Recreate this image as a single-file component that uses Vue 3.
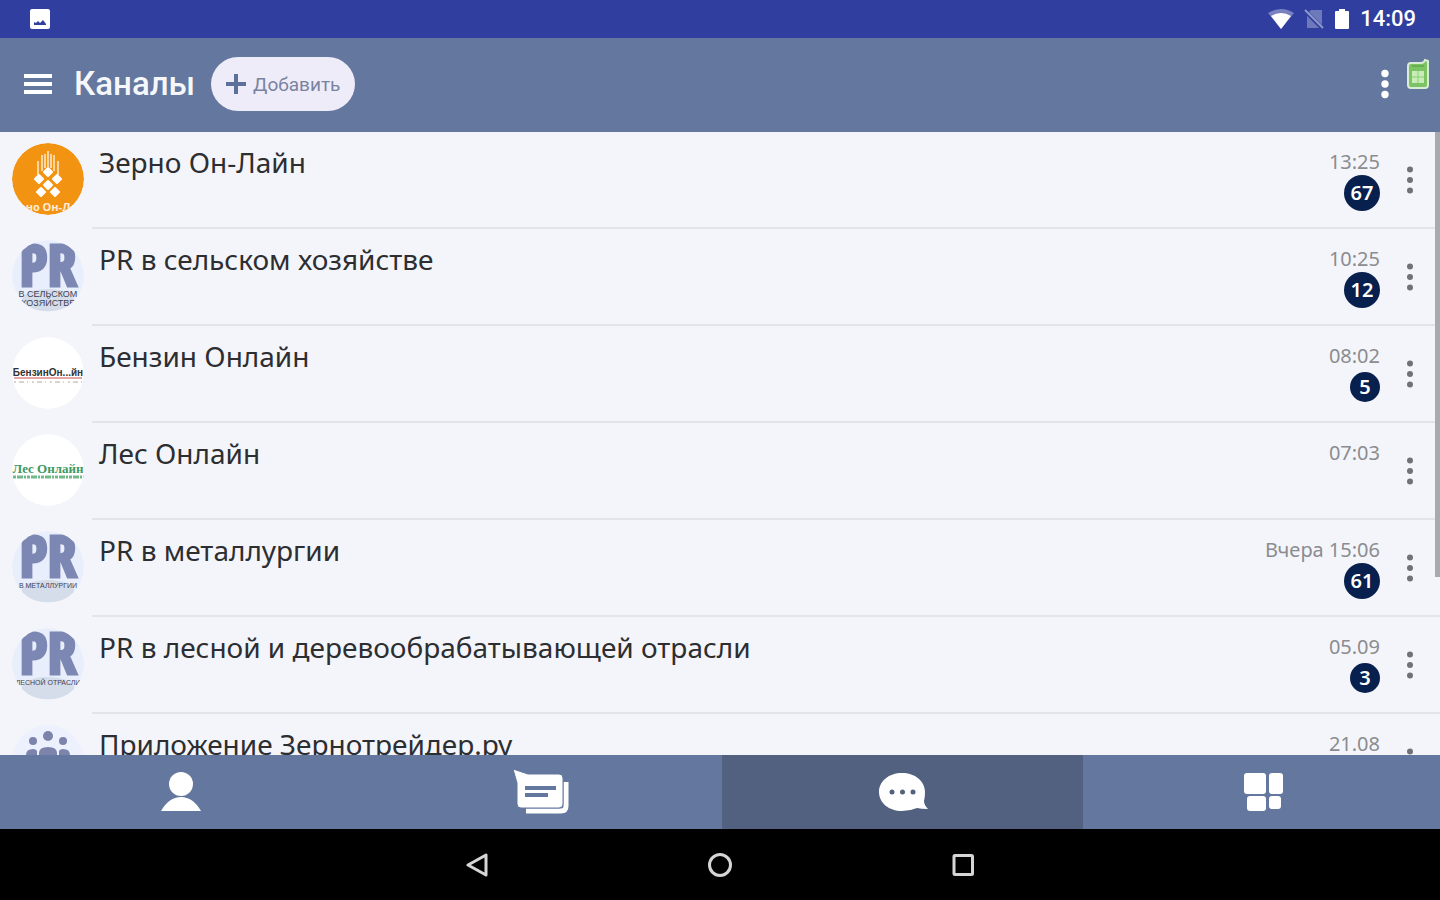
<script setup>
import { ref } from "vue";

const channels = [
    { name: "Зерно Он-Лайн", time: "13:25", unread: 67, logo: "grain" },
    { name: "PR в сельском хозяйстве", time: "10:25", unread: 12, logo: "pr", lines: ["В СЕЛЬСКОМ", "ХОЗЯЙСТВЕ"] },
    { name: "Бензин Онлайн", time: "08:02", unread: 5, logo: "petrol" },
    { name: "Лес Онлайн", time: "07:03", unread: 0, logo: "forest" },
    { name: "PR в металлургии", time: "Вчера 15:06", unread: 61, logo: "pr", lines: ["В МЕТАЛЛУРГИИ"] },
    { name: "PR в лесной и деревообрабатывающей отрасли", time: "05.09", unread: 3, logo: "pr", lines: ["ЛЕСНОЙ ОТРАСЛИ"] },
    { name: "Приложение Зернотрейдер.ру", time: "21.08", unread: 0, logo: "people" }
];

const tabs = [
    { id: "profile", label: "Профиль" },
    { id: "news", label: "Новости" },
    { id: "chats", label: "Каналы" },
    { id: "apps", label: "Сервисы" }
];

const activeTab = ref("chats");
</script>

<template>
    <div class="screen">
        <div class="status-bar">
            <svg width="22" height="22" viewBox="0 0 22 22">
                <rect x="1" y="1" width="20" height="20" rx="2" fill="#fff" />
                <path d="M5 17v-3l2 1 2-2 2 2 3-3 3 4v1z" fill="#303f9f" />
            </svg>
            <div class="status-right">
                <svg width="26" height="20" viewBox="0 0 26 20">
                    <path d="M0 4Q13-4 26 4L13 20z" fill="#fff" opacity=".35" />
                    <path d="M3 7Q13 1 23 7L13 20z" fill="#fff" />
                </svg>
                <svg width="20" height="20" viewBox="0 0 20 20">
                    <path d="M7 1h11v18H3V5z" fill="#fff" opacity=".3" />
                    <path d="M1 2l17 17" stroke="#303f9f" stroke-width="4" />
                    <path d="M1 1l18 18" stroke="#8f98cc" stroke-width="2" />
                </svg>
                <svg width="16" height="20" viewBox="0 0 16 20">
                    <path d="M2 2h3V0h6v2h3q1 0 1 1v16q0 1-1 1H2q-1 0-1-1V3q0-1 1-1z" fill="#fff" />
                </svg>
                <span class="clock">14:09</span>
            </div>
        </div>

        <header class="toolbar">
            <button class="icon-button" aria-label="Меню">
                <svg width="28" height="22" viewBox="0 0 28 22">
                    <path d="M0 3h28M0 11h28M0 19h28" stroke="#fff" stroke-width="4" />
                </svg>
            </button>
            <h1>Каналы</h1>
            <button class="add-button">
                <svg width="20" height="20" viewBox="0 0 20 20">
                    <path d="M10 0v20M0 10h20" stroke="#5d7099" stroke-width="4" />
                </svg>
                Добавить
            </button>
            <div class="toolbar-right">
                <button class="icon-button" aria-label="Ещё">
                    <svg width="10" height="30" viewBox="0 0 10 30" fill="#fff">
                        <circle cx="5" cy="4.500" r="3.700" />
                        <circle cx="5" cy="15" r="3.700" />
                        <circle cx="5" cy="25.500" r="3.700" />
                    </svg>
                </button>
                <svg class="sim" width="24" height="32" viewBox="0 0 24 32">
                    <path d="M5 5h10q3 0 4-3l3 1v24q0 3-3 3H5q-3 0-3-3V8q0-3 3-3z" fill="#7cc366" stroke="#d9ecd5" stroke-width="2" />
                    <path d="M6 8h12" stroke="#67b050" stroke-width="2" />
                    <rect x="6" y="13" width="12" height="12" fill="#c9ecb9" />
                    <path d="M12 13v12M6 19h12" stroke="#8bcf74" stroke-width="1" />
                </svg>
            </div>
        </header>

        <main class="list-area">
            <ul class="channels">
                <li v-for="channel in channels" :key="channel.name" class="channel">
                    <svg class="avatar" width="72" height="72" viewBox="0 0 72 72">
                        <template v-if="channel.logo === 'grain'">
                            <circle cx="36" cy="36" r="36" fill="#f39312" />
                            <path d="M26 32V18M30 28V12M36 24V8M42 28V12M46 32V18M33 25V11M39 25V11"
                                  fill="none" stroke="#fbd6a3" stroke-width="2" />
                            <g fill="#fff" stroke="#fff" stroke-width="2" stroke-linejoin="round">
                                <path d="M36 25l4 4-4 4-4-4zM27 32l4 4-4 4-4-4zM45 32l4 4-4 4-4-4zM36 38l4 4-4 4-4-4z" />
                                <path d="M29 45l4 4-4 4-4-4zM43 45l4 4-4 4-4-4z" />
                            </g>
                            <text x="36" y="68" class="grain-text">но Он-Л</text>
                        </template>
                        <template v-else-if="channel.logo === 'pr'">
                            <circle cx="36" cy="36" r="36" fill="#e9eefc" />
                            <ellipse cx="36" cy="60" rx="26" ry="11" fill="#d5dcea" />
                            <text x="36" y="46" class="pr-text">PR</text>
                            <text v-for="(line, i) in channel.lines" :key="line" x="36" :y="57 + i * 9"
                                  :class="channel.lines.length > 1 ? 'pr-caption' : 'pr-caption-small'">{{ line }}</text>
                        </template>
                        <template v-else-if="channel.logo === 'petrol'">
                            <circle cx="36" cy="36" r="36" fill="#fff" />
                            <text x="36" y="39" class="petrol-text">БензинОн...йн</text>
                            <path d="M2 41h68" stroke="#e8a5a5" stroke-width="2" />
                            <path d="M2 45h68" stroke="#aaa" stroke-width="1" stroke-dasharray="2 3 5 3 1 4" />
                        </template>
                        <template v-else-if="channel.logo === 'forest'">
                            <circle cx="36" cy="36" r="36" fill="#fff" />
                            <text x="36" y="39" class="forest-text">Лес Онлайн</text>
                            <path d="M1 43h71" stroke="#72b98a" stroke-width="3" stroke-dasharray="3 1 6 1 2 1" />
                        </template>
                        <template v-else>
                            <circle cx="36" cy="36" r="36" fill="#edf1fd" />
                            <g fill="#7c84ab">
                                <circle cx="36" cy="11" r="5" />
                                <circle cx="21" cy="16" r="4" />
                                <circle cx="51" cy="16" r="4" />
                                <path d="M27 40V28q0-6 9-6t9 6v12zM14 40V30q0-6 7-6 3 0 4 2v14zM58 40V30q0-6-7-6-3 0-4 2v14z" />
                            </g>
                        </template>
                    </svg>
                    <div class="channel-body">
                        <a href="#" class="channel-name">{{ channel.name }}</a>
                        <div class="meta">
                            <span class="time">{{ channel.time }}</span>
                            <span v-if="channel.unread" class="badge-slot">
                                <span class="badge" :class="{ small: channel.unread < 10 }">{{ channel.unread }}</span>
                            </span>
                        </div>
                        <button class="icon-button row-menu" aria-label="Действия">
                            <svg width="8" height="28" viewBox="0 0 8 28" fill="#717276">
                                <circle cx="4" cy="3.500" r="3" />
                                <circle cx="4" cy="14" r="3" />
                                <circle cx="4" cy="24.500" r="3" />
                            </svg>
                        </button>
                    </div>
                </li>
            </ul>
            <div class="scroll-thumb"></div>
        </main>

        <nav class="tabs">
            <button v-for="tab in tabs" :key="tab.id" class="tab" :class="{ active: activeTab === tab.id }"
                    :aria-label="tab.label" @click="activeTab = tab.id">
                <svg v-if="tab.id === 'profile'" width="40" height="40" viewBox="0 0 40 40" fill="#fff">
                    <circle cx="20" cy="12" r="12" />
                    <path d="M0 39Q8 25 20 25t20 14z" />
                </svg>
                <svg v-else-if="tab.id === 'news'" width="58" height="48" viewBox="1 0 58 48">
                    <path d="M14 43h35q5 0 5-5V14" fill="none" stroke="#fff" stroke-width="5" />
                    <path d="M1 1l15 5h31q4 0 4 4v26q0 4-4 4H9q-4 0-4-4V15z" fill="#fff" stroke="#64789f" stroke-width="1" />
                    <path d="M13 20h31M13 27h23" stroke="#64789f" stroke-width="4" />
                </svg>
                <svg v-else-if="tab.id === 'chats'" width="50" height="40" viewBox="0 0 50 40">
                    <path d="M24 1C37 1 47 9 47 20q0 5-1 9 0 4 4 8-7 0-11-1-7 3-15 3C11 39 1 31 1 20S11 1 24 1z" fill="#fff" />
                    <g fill="#51617f">
                        <circle cx="14" cy="20" r="2.500" />
                        <circle cx="24.500" cy="20" r="2.500" />
                        <circle cx="35" cy="20" r="2.500" />
                    </g>
                </svg>
                <svg v-else width="40" height="40" viewBox="0 0 40 40" fill="#fff">
                    <rect x="0" y="1" width="22" height="21" rx="3" />
                    <rect x="25" y="1" width="14" height="21" rx="3" />
                    <rect x="3" y="24" width="19" height="15" rx="3" />
                    <rect x="25" y="24" width="12" height="13" rx="3" />
                </svg>
            </button>
        </nav>

        <div class="system-bar">
            <button class="icon-button" aria-label="Назад">
                <svg width="24" height="24" viewBox="0 0 24 24" fill="none" stroke="#d5d5d5" stroke-width="3">
                    <path d="M21 2v20L3 12z" stroke-linejoin="round" />
                </svg>
            </button>
            <button class="icon-button" aria-label="Домой">
                <svg width="24" height="24" viewBox="0 0 24 24" fill="none" stroke="#d5d5d5" stroke-width="3">
                    <circle cx="12" cy="12" r="10.500" />
                </svg>
            </button>
            <button class="icon-button" aria-label="Недавние">
                <svg width="24" height="24" viewBox="0 0 24 24" fill="none" stroke="#d5d5d5" stroke-width="3">
                    <rect x="3" y="2.500" width="18.500" height="19" rx="1" />
                </svg>
            </button>
        </div>
    </div>
</template>

<style>
body {
    margin: 0;
}
</style>

<style scoped>
.screen {
    height: 100vh;
    display: flex;
    flex-direction: column;
    background: #f4f5fa;
    font-family: "Noto Sans", "Open Sans", sans-serif;
    overflow: hidden;
}

svg {
    display: block;
    flex-shrink: 0;
}

button {
    border: none;
    padding: 0;
    font-family: inherit;
    cursor: pointer;
}

.icon-button {
    background: none;
}

.status-bar {
    height: 38px;
    flex-shrink: 0;
    display: flex;
    align-items: center;
    justify-content: space-between;
    padding: 0 24px 0 29px;
    background: #303f9f;
}

.status-right {
    display: flex;
    align-items: center;
    gap: 10px;
}

.clock {
    font: 500 22px/24px Roboto, sans-serif;
    color: #fff;
}

.toolbar {
    height: 94px;
    flex-shrink: 0;
    box-sizing: border-box;
    display: flex;
    align-items: center;
    padding: 0 10px 2px 24px;
    background: #64789f;
}

h1 {
    margin: 0 16px 0 22px;
    font: 500 33px/40px Roboto, sans-serif;
    color: #f6f7fb;
}

.add-button {
    height: 54px;
    display: flex;
    align-items: center;
    gap: 7px;
    padding: 0 15px;
    border-radius: 27px;
    background: #efecf9;
    color: #7983a0;
    font-family: Roboto, sans-serif;
    font-size: 19px;
}

.toolbar-right {
    margin-left: auto;
    display: flex;
    align-items: center;
    gap: 16px;
}

.sim {
    margin-bottom: 20px;
}

.list-area {
    position: relative;
    flex: 1;
    min-height: 0;
    overflow: hidden;
}

.channels {
    margin: 0;
    padding: 0;
    list-style: none;
}

.channel {
    height: 97px;
    display: flex;
    align-items: flex-start;
    gap: 8px;
    padding-left: 12px;
}

.avatar {
    margin-top: 11px;
    border-radius: 50%;
}

.channel-body {
    flex: 1;
    height: 97px;
    box-sizing: border-box;
    display: flex;
    align-items: flex-start;
    padding-left: 7px;
    border-bottom: 2px solid #e2e4e9;
}

.channel-name {
    flex: 1;
    padding-top: 10px;
    font-size: 28px;
    line-height: 40px;
    color: #2d2e31;
    text-decoration: none;
}

.meta {
    display: flex;
    flex-direction: column;
    align-items: flex-end;
    padding-top: 17px;
}

.time {
    font-size: 20px;
    line-height: 26px;
    color: #8b8c90;
}

.badge-slot {
    height: 36px;
    display: flex;
    align-items: center;
}

.badge {
    width: 36px;
    height: 36px;
    border-radius: 50%;
    background: #07204e;
    color: #fff;
    font-size: 20px;
    font-weight: 600;
    line-height: 36px;
    text-align: center;
}

.badge.small {
    width: 30px;
    height: 30px;
    line-height: 30px;
}

.row-menu {
    width: 60px;
    height: 95px;
    display: flex;
    align-items: center;
    justify-content: center;
}

.scroll-thumb {
    position: absolute;
    top: 0;
    right: 0;
    width: 5px;
    height: calc(100% * 5 / 7);
    background: #a9aaad;
}

.grain-text {
    font: 700 11px "Open Sans", sans-serif;
    fill: #fdebd2;
    text-anchor: middle;
}

.pr-text {
    font: 700 58px "Liberation Sans Narrow", "Open Sans Condensed", Lato, sans-serif;
    fill: #7c88b3;
    stroke: #7c88b3;
    stroke-width: 3px;
    text-anchor: middle;
}

.pr-caption {
    font: 9px "Liberation Sans", sans-serif;
    fill: #3e4352;
    text-anchor: middle;
}

.pr-caption-small {
    font: 7px "Liberation Sans", sans-serif;
    fill: #3e4352;
    text-anchor: middle;
}

.petrol-text {
    font: 700 10px "Liberation Sans", sans-serif;
    fill: #333;
    text-anchor: middle;
}

.forest-text {
    font: 700 13px "Liberation Serif", serif;
    fill: #3c9a5f;
    text-anchor: middle;
}

.tabs {
    height: 74px;
    flex-shrink: 0;
    display: flex;
    background: #64789f;
}

.tab {
    width: calc(25% + 1px);
    flex-shrink: 0;
    display: flex;
    align-items: center;
    justify-content: center;
    background: none;
}

.tab.active {
    background: #51617f;
}

.system-bar {
    height: 71px;
    flex-shrink: 0;
    display: flex;
    align-items: center;
    justify-content: center;
    gap: 219px;
    background: #000;
}
</style>
